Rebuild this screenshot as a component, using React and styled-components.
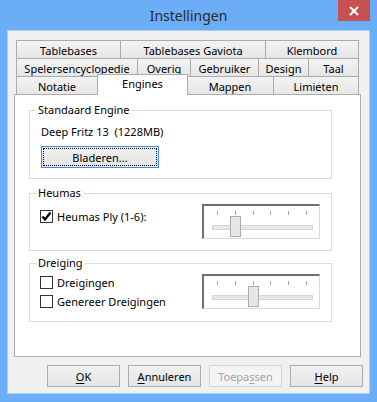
import styled, { createGlobalStyle } from "styled-components"

const GlobalStyle = createGlobalStyle`
    html, body {
        margin: 0;
        padding: 0;
        background: #6badf6;
    }
    body {
        font-family: "Noto Sans", "Open Sans", sans-serif;
        font-size: 11px;
        color: #000;
    }
`

const Window = styled.div`
    width: 377px;
    height: 402px;
    box-sizing: border-box;
    background: #6badf6;
    display: flex;
    flex-direction: column;
`

const TitleBar = styled.div`
    height: 30px;
    flex: none;
    display: flex;
    align-items: center;
    justify-content: center;
    position: relative;
    font-size: 14px;
    color: #2b2b2b;
`

const CloseButton = styled.div`
    position: absolute;
    top: 0;
    right: 7px;
    width: 32px;
    height: 21px;
    background: #c75050;
    display: flex;
    align-items: center;
    justify-content: center;
`

const Client = styled.div`
    flex: 1;
    margin: 0 7px 8px 7px;
    border: 1px solid #a9cdf5;
    background: #f0f0f0;
    display: flex;
    flex-direction: column;
`

const Tabs = styled.div`
    margin: 9px 0 0 8px;
    display: flex;
    flex-direction: column;
`

const TabRow = styled.div`
    display: flex;
    align-items: flex-end;
    height: 18px;
`

const Tab = styled.div`
    box-sizing: border-box;
    width: ${p => p.$w}px;
    height: 18px;
    margin-left: ${p => p.$first ? 0 : -1}px;
    border: 1px solid #acacac;
    border-bottom: none;
    background: linear-gradient(#f3f3f3, #e6e6e6);
    display: flex;
    align-items: center;
    justify-content: center;
    padding-top: 1px;
    white-space: nowrap;
`

const ActiveTab = styled(Tab)`
    height: 21px;
    margin-bottom: -1px;
    margin-right: -1px;
    position: relative;
    z-index: 1;
    background: #fff;
    align-items: flex-start;
    padding-top: 1px;
`

const Panel = styled.div`
    box-sizing: border-box;
    margin-left: 6px;
    width: 347px;
    height: 263px;
    background: #fff;
    border: 1px solid #acacac;
    padding: 15px 0 0 14px;
    display: flex;
    flex-direction: column;
`

const Group = styled.div`
    box-sizing: border-box;
    position: relative;
    width: 303px;
    height: ${p => p.$h}px;
    margin-top: ${p => p.$mt || 0}px;
    border: 1px solid #dcdcdc;
`

const Legend = styled.span`
    position: absolute;
    top: -9px;
    left: 6px;
    padding: 0 2px;
    background: #fff;
    line-height: 16px;
`

const EngineBody = styled.div`
    padding: 13px 0 0 11px;
    display: flex;
    flex-direction: column;
    align-items: flex-start;
`

const Line = styled.div`
    line-height: 16px;
`

const Button = styled.button`
    box-sizing: border-box;
    width: ${p => p.$w || 73}px;
    height: 22px;
    margin-top: ${p => p.$mt || 0}px;
    border: 1px solid ${p => p.$focus ? "#3c8ee6" : p.disabled ? "#d5d5d5" : "#acacac"};
    background: ${p => p.disabled ? "#f4f4f4" : "linear-gradient(#f0f0f0, #e5e5e5)"};
    color: ${p => p.disabled ? "#a3a3a3" : "#000"};
    font: inherit;
    padding: 0;
    outline: ${p => p.$focus ? "1px dotted #000" : "none"};
    outline-offset: -3px;
    u {
        text-decoration: underline;
        text-underline-offset: 2px;
    }
`

const Row = styled.div`
    display: flex;
    align-items: flex-start;
    padding: 10px 11px 0 10px;
`

const Checks = styled.div`
    display: flex;
    flex-direction: column;
    gap: 6px;
    margin-top: ${p => p.$mt}px;
`

const CheckLine = styled.label`
    display: flex;
    align-items: center;
    gap: 4px;
    height: 13px;
`

const Box = styled.span`
    box-sizing: border-box;
    width: 13px;
    height: 13px;
    border: 1px solid #333;
    background: #fff;
    display: flex;
    align-items: center;
    justify-content: center;
`

const SliderFrame = styled.div`
    box-sizing: border-box;
    position: relative;
    margin-left: auto;
    width: 118px;
    height: 35px;
    border-top: 2px solid #707070;
    border-left: 2px solid #707070;
    border-right: 1px solid #dadada;
    border-bottom: 1px solid #dadada;
    background: #fff;
    padding-top: 5px;
`

const Ticks = styled.div`
    width: 90px;
    margin-left: 13px;
    display: flex;
    justify-content: space-between;
`

const Tick = styled.span`
    width: 1px;
    height: 4px;
    background: #a6a6a6;
`

const Track = styled.div`
    box-sizing: border-box;
    width: 101px;
    height: 5px;
    margin: 10px 0 0 8px;
    background: #e7e7e7;
    border: 1px solid #d6d6d6;
`

const Thumb = styled.div`
    box-sizing: border-box;
    position: absolute;
    top: 10px;
    width: 11px;
    height: 21px;
    background: #e6e6e6;
    border: 1px solid #adadad;
`

const Footer = styled.div`
    display: flex;
    justify-content: flex-end;
    gap: 8px;
    margin-top: 8px;
    padding-right: 6px;
`

const tabRows = [
    [["Tablebases", 105], ["Tablebases Gaviota", 146], ["Klembord", 94]],
    [["Spelersencyclopedie", 122], ["Overig", 54], ["Gebruiker", 69], ["Design", 51], ["Taal", 51]],
]

const Check = ({checked, children}) => (
    <CheckLine>
        <Box>
            {checked && (
                <svg width="11" height="11" viewBox="0 0 11 11">
                    <path d="M1.5 5.5 L4 8.5 L9.5 1.5" fill="none" stroke="#000" strokeWidth="2.2" />
                </svg>
            )}
        </Box>
        {children}
    </CheckLine>
)

const Slider = ({value, max}) => {
    const step = 89 / (max - 1)
    return (
        <SliderFrame>
            <Ticks>
                {Array.from({length: max}).map((_, i) => <Tick key={i} />)}
            </Ticks>
            <Track />
            <Thumb style={{left: 13 + (value - 1) * step - 5}} />
        </SliderFrame>
    )
}

const App = () => {
    return (
        <Window>
            <GlobalStyle />
            <TitleBar>
                Instellingen
                <CloseButton>
                    <svg width="10" height="10" viewBox="0 0 10 10">
                        <path d="M1 1 L9 9 M9 1 L1 9" stroke="#fff" strokeWidth="2" />
                    </svg>
                </CloseButton>
            </TitleBar>
            <Client>
                <Tabs>
                    {tabRows.map((row, r) => (
                        <TabRow key={r}>
                            {row.map(([name, w], i) => <Tab key={name} $w={w} $first={i === 0}>{name}</Tab>)}
                        </TabRow>
                    ))}
                    <TabRow>
                        <Tab $w={82} $first>Notatie</Tab>
                        <ActiveTab $w={91}>Engines</ActiveTab>
                        <Tab $w={88}>Mappen</Tab>
                        <Tab $w={86}>Limieten</Tab>
                    </TabRow>
                </Tabs>
                <Panel>
                    <Group $h={69}>
                        <Legend>Standaard Engine</Legend>
                        <EngineBody>
                            <Line>Deep Fritz 13&nbsp; (1228MB)</Line>
                            <Button $w={118} $mt={6} $focus>Bladeren...</Button>
                        </EngineBody>
                    </Group>
                    <Group $h={58} $mt={14}>
                        <Legend>Heumas</Legend>
                        <Row>
                            <Checks $mt={6}>
                                <Check checked>Heumas Ply (1-6):</Check>
                            </Checks>
                            <Slider value={2} max={6} />
                        </Row>
                    </Group>
                    <Group $h={59} $mt={12}>
                        <Legend>Dreiging</Legend>
                        <Row>
                            <Checks $mt={2}>
                                <Check>Dreigingen</Check>
                                <Check>Genereer Dreigingen</Check>
                            </Checks>
                            <Slider value={3} max={6} />
                        </Row>
                    </Group>
                </Panel>
                <Footer>
                    <Button><u>O</u>K</Button>
                    <Button><u>A</u>nnuleren</Button>
                    <Button disabled>Toepa<u>s</u>sen</Button>
                    <Button><u>H</u>elp</Button>
                </Footer>
            </Client>
        </Window>
    )
}

export default App
